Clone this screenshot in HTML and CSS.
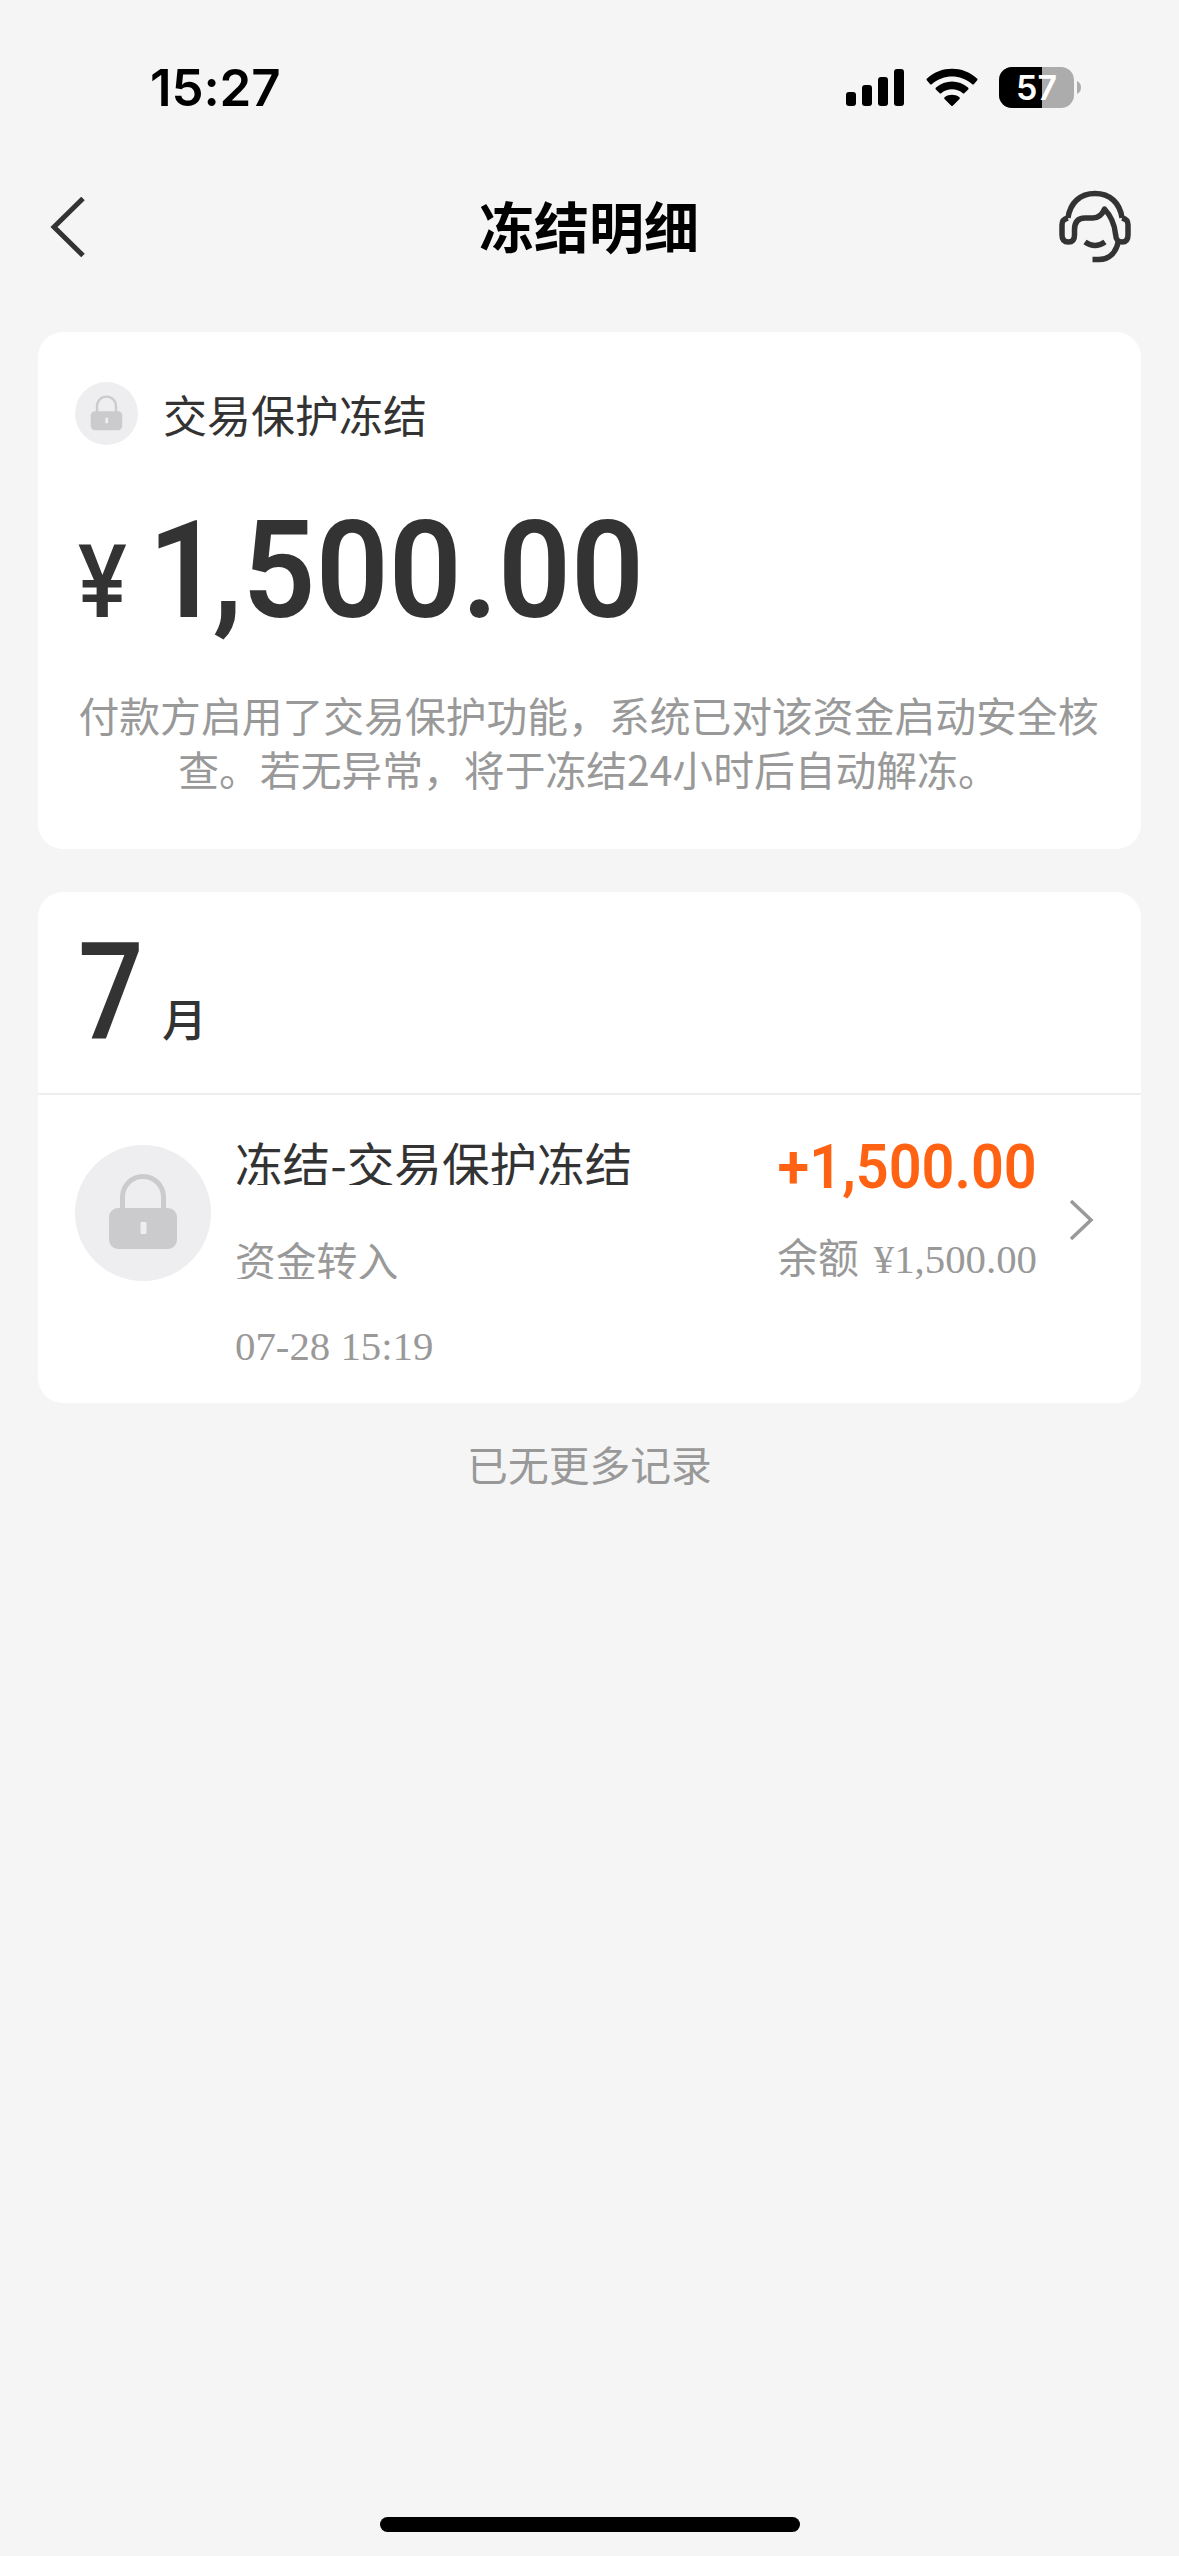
FILE: index.html
```html
<!DOCTYPE html>
<html lang="zh-CN">
<head>
<meta charset="utf-8">
<title>冻结明细</title>
<link rel="stylesheet" href="styles.css">
</head>
<body>
<div class="screen">
  <div class="status">
    <span class="clock">15:27</span>
    <div class="status-icons">
      <svg class="signal" width="58" height="38" viewBox="0 0 58 38"><rect x="0" y="24" width="10" height="14" rx="3"/><rect x="16" y="17" width="10" height="21" rx="3"/><rect x="32" y="9" width="10" height="29" rx="3"/><rect x="48" y="1" width="10" height="37" rx="3"/></svg>
      <svg class="wifi" width="52" height="38" viewBox="0 0 52 38"><path d="M1 12.500Q0 11.500 1 10.500C15-2.500 37-2.500 51 10.500Q52 11.500 51 12.500L48 16Q47 17 46 16C34.500 6 17.500 6 6 16Q5 17 4 16Z"/><path d="M9.800 21.500Q9 20.500 10 19.500C19 11.500 33 11.500 42 19.500Q43 20.500 42.200 21.500L38.500 25Q37.500 26 36.500 25C30.500 20 21.500 20 15.500 25Q14.500 26 13.500 25Z"/><path d="M18.500 31Q17.800 30 18.800 29C23 26 29 26 33.200 29Q34.200 30 33.500 31L27 37.500Q26 38.500 25 37.500Z"/></svg>
      <svg class="battery" width="83" height="42" viewBox="0 0 83 42"><defs><clipPath id="cell"><rect y="0" width="75" height="41" rx="13"/></clipPath></defs><g clip-path="url(#cell)"><rect width="75" height="41" fill="#acacac"/><rect width="43" height="41" fill="#000"/></g><path d="M78 14Q82 16 82 20.500T78 27Z" fill="#acacac"/><text class="battery-level" x="37.500" y="33" text-anchor="middle">57</text></svg>
    </div>
  </div>
  <header class="nav">
    <svg class="back" width="36" height="60" viewBox="0 0 36 60"><path d="M34 1.500 5 30 34 58.500"/></svg>
    <h1 class="title">冻结明细</h1>
    <svg class="service" width="72" height="74" viewBox="0 0 72 74"><path d="M9 28C11 13 21 3.500 36 3.500S61 13 63 28"/><path d="M9 28C4.500 29 3 31 3 35V45C3 49.500 5 52 9.500 52S15.500 49 15.500 45V40C15.500 32 19 28 26 28H34C40 28 43 25 45.500 19C52 26 55.500 34 56.500 44C57 50 59 52 63 52S69 49.500 69 45V35C69 31 67.500 29 63 28"/><path d="M26 52Q36 59 46 52"/><path d="M59.500 51C57 63 50 69.500 40 69.500H33.500"/></svg>
  </header>
  <main class="content">
    <section class="card summary">
      <div class="kind">
        <svg class="lock-small" viewBox="0 0 136 136"><use href="#lock"/></svg>
        <span>交易保护冻结</span>
      </div>
      <div class="total"><span class="yen">¥</span><span class="sum"><span class="thousands">1</span>,500.00</span></div>
      <p class="note">付款方启用了交易保护功能，系统已对该资金启动安全核查。若无异常，将于冻结24小时后自动解冻。</p>
    </section>
    <section class="card records">
      <div class="month"><span class="month-number">7</span><span class="month-unit">月</span></div>
      <div class="record">
        <svg class="lock-large" viewBox="0 0 136 136"><g id="lock"><circle cx="68" cy="68" r="68" fill="#eeedef"/><path d="M47.500 65V52A20.500 20.500 0 0 1 88.500 52V65" fill="none" stroke="#cbcacc" stroke-width="5"/><rect x="34" y="63" width="68" height="41" rx="9" fill="#cbcacc"/><rect x="65.500" y="77" width="6" height="12" rx="1" fill="#eeedef"/></g></svg>
        <div class="detail">
          <div class="name">冻结-交易保护冻结</div>
          <div class="sub">资金转入</div>
          <div class="time">07-28 15:19</div>
        </div>
        <div class="figures">
          <div class="change"><span>+1,500.00</span></div>
          <div class="balance"><span>余额</span><span>¥1,500.00</span></div>
        </div>
        <svg class="more" width="26" height="42" viewBox="0 0 26 42"><path d="M2 2 22 21 2 40"/></svg>
      </div>
    </section>
    <p class="end">已无更多记录</p>
  </main>
  <div class="home"></div>
</div>
</body>
</html>
```
FILE: styles.css
```css
* { box-sizing: border-box; }
body { margin: 0; background: #f5f5f5; color: #333; font-family: "Noto Sans CJK SC", sans-serif; }
h1, p { margin: 0; }
.screen { width: 1179px; height: 2556px; display: flex; flex-direction: column; }

.status { height: 172px; padding: 67px 97px 0 150px; display: flex; justify-content: space-between; align-items: flex-start; }
.clock { font: 600 51px/42px Inter, sans-serif; color: #000; letter-spacing: -0.1px; }
.status-icons { display: flex; align-items: flex-start; }
.signal { margin-top: 1px; }
.wifi { margin: 1px 21px 0 22px; }
.battery-level { font: 600 34px Inter, sans-serif; fill: #fff; }

.nav { height: 160px; padding: 17px 48px 0 49px; display: flex; justify-content: space-between; align-items: flex-start; }
.back, .service, .more { fill: none; stroke: #333; stroke-width: 5; }
.back { margin-top: 8px; margin-right: 34px; }
.title { margin-top: -3px; font-size: 55px; line-height: 76px; font-weight: 600; color: #000; }
.service { margin-top: 1px; stroke-width: 5.500; }
.service path { stroke-linejoin: round; }

.content { flex: 1; padding: 0 38px; }
.card { background: #fff; border-radius: 25px; }
.summary { height: 517px; padding: 50px 37px 0; }
.kind { height: 63px; display: flex; align-items: center; gap: 25px; font-size: 44px; line-height: 62px; }
.lock-small { width: 63px; height: 63px; }
.total { height: 158px; margin-top: 47px; display: flex; align-items: baseline; font-family: Roboto, sans-serif; line-height: 158px; }
.yen { width: 70px; margin-left: 3px; font-size: 102px; font-weight: 500; transform: scaleX(.9); transform-origin: left; }
.sum { font-size: 136px; font-weight: 600; transform: scaleX(.94); transform-origin: left; white-space: nowrap; }
.thousands { letter-spacing: -9px; }
.note { margin: 38px 1px 0 -1px; font-size: 40.8px; line-height: 54px; color: #999; text-align: center; }

.records { height: 511px; margin-top: 43px; }
.month { height: 203px; padding: 22px 40px 0; border-bottom: 2px solid #eee; display: flex; align-items: baseline; }
.month-number { width: 85px; font: 500 136px/158px Roboto, sans-serif; transform: scaleX(.85); transform-origin: left; }
.month-unit { margin-left: -1px; font-size: 45px; line-height: 60px; font-weight: 500; transform: translateY(-2px); }
.record { height: 308px; padding: 44px 46px 0 37px; display: flex; align-items: flex-start; }
.lock-large { width: 136px; height: 136px; margin-top: 6px; }
.detail { flex: 1; margin-left: 24px; }
.name { height: 46px; overflow: hidden; font-size: 47.6px; line-height: 48px; }
.sub { height: 42px; margin-top: 52px; overflow: hidden; font-size: 40.8px; line-height: 46px; color: #999; }
.time { margin-top: 44px; font: 40.8px/48px "Liberation Serif", serif; color: #999; }
.figures { display: flex; flex-direction: column; align-items: flex-end; }
.change { font: 600 62px/56px Roboto, sans-serif; color: #ff6213; }
.change span { display: inline-block; transform: scaleX(.93); transform-origin: right; }
.balance { margin-top: 41px; display: flex; gap: 15px; font: 40.8px/48px "Liberation Serif", "Noto Sans CJK SC", serif; color: #999; }
.more { margin: 60px 0 0 32px; stroke: #999; stroke-width: 3.500; }
.end { margin-top: 34px; font-size: 40.8px; line-height: 54px; color: #999; text-align: center; }

.home { width: 420px; height: 15px; margin: 0 auto 24px; border-radius: 8px; background: #000; }
```
